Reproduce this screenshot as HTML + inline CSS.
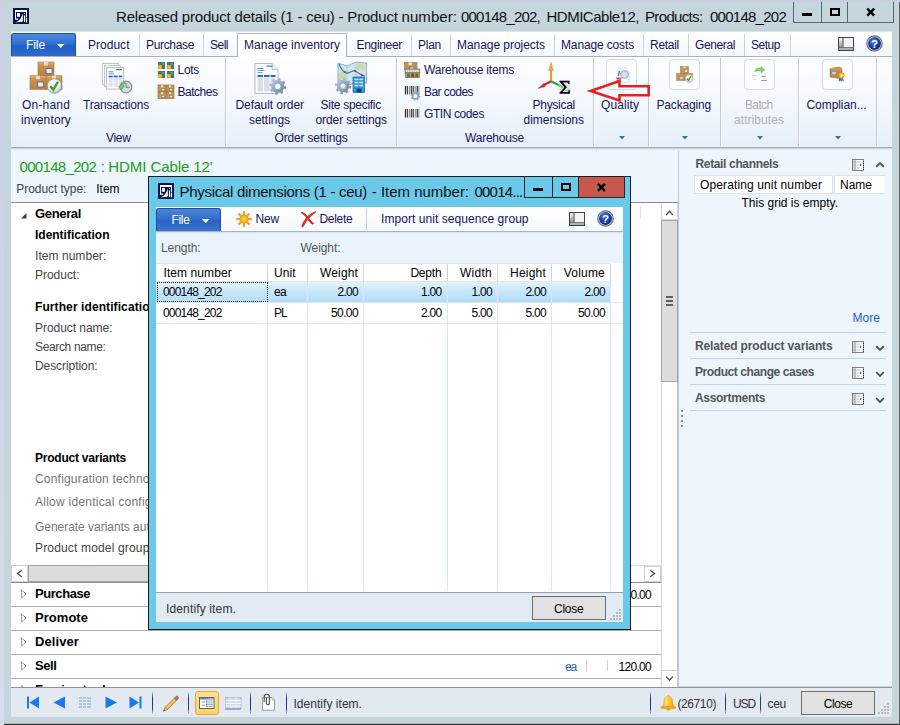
<!DOCTYPE html>
<html><head><meta charset="utf-8"><title>Released product details</title>
<style>
html,body{margin:0;padding:0}
body{width:900px;height:725px;position:relative;overflow:hidden;background:#c4d5dc;font-family:"Liberation Sans",sans-serif;font-size:12px}
.t{position:absolute;white-space:pre;line-height:1;z-index:1}
.b{position:absolute;box-sizing:border-box}
.vl{position:absolute;width:1px}
.hl{position:absolute;height:1px}
svg{position:absolute;overflow:visible}
</style></head><body>
<!-- ===== main window chrome ===== -->
<div class="b" style="left:0;top:0;width:900px;height:2px;background:#c9cfe1"></div>
<div class="b" style="left:0;top:0;width:4px;height:725px;background:linear-gradient(#c9cfe1,#d6dcec)"></div>
<div class="b" style="left:4px;top:723px;width:896px;height:1px;background:#a3afb5"></div><div class="b" style="left:4px;top:724px;width:896px;height:1px;background:#3c3c3c"></div>
<div class="vl" style="left:899px;top:2px;height:723px;background:#5a6468"></div>
<!-- window buttons -->
<div class="vl" style="left:793px;top:2px;height:20px;background:#56666e"></div>
<div class="vl" style="left:821px;top:2px;height:20px;background:#56666e"></div>
<div class="vl" style="left:847px;top:2px;height:20px;background:#56666e"></div>
<div class="vl" style="left:893px;top:2px;height:20px;background:#56666e"></div>
<div class="hl" style="left:793px;top:22px;width:101px;background:#56666e"></div>
<div class="b" style="left:802px;top:13px;width:10px;height:3px;background:#000"></div>
<div class="b" style="left:830px;top:8px;width:10px;height:8px;border:2px solid #000"></div>
<svg style="left:865px;top:7px" width="12" height="10"><path d="M2.200 1.700L9.200 8.700M9.200 1.700L2.200 8.700" stroke="#000" stroke-width="2.500" fill="none"/></svg>
<!-- app icon -->
<svg style="left:13px;top:8px" width="16" height="16" viewBox="0 0 16 16"><g id="appicon"><rect x="0" y="0" width="16" height="16" fill="#05134f"/><path d="M2 2h12v7.500h-1V4H3v6.600h2.200v1.100H2z" fill="#fff"/><rect x="4" y="5" width="2.900" height="3.800" fill="#fff"/><path d="M9.600 5.200c.2 3.500.3 6 .2 8.200-2 .3-4.500.6-7 1.100 3.500-1.700 6-4.600 6.800-9.300z" fill="#fff"/><rect x="10.900" y="7.400" width="1.300" height="6.600" fill="#fff"/><circle cx="11.500" cy="5.600" r="0.650" fill="#fff"/><rect x="13" y="10" width="1.100" height="4.400" fill="#fff"/></g></svg>
<!-- tab row -->
<div class="hl" style="left:11px;top:31px;width:881px;background:#dbe6ea"></div>
<div class="b" style="left:11px;top:32px;width:881px;height:24px;background:linear-gradient(#fff,#f3f8fd)"></div>
<!-- ribbon body -->
<div class="b" style="left:11px;top:56px;width:881px;height:91px;background:linear-gradient(#fefeff 0,#f3f8fd 50%,#e6effa 100%);border-top:1px solid #c5d0dc"></div>
<div class="hl" style="left:11px;top:147px;width:881px;background:#a3abb4"></div><div class="hl" style="left:11px;top:148px;width:881px;background:#ccd4dc;z-index:1"></div><div class="hl" style="left:11px;top:149px;width:881px;background:#e2eaf2;z-index:1"></div>
<!-- File button -->
<div class="b" style="left:11px;top:33px;width:65px;height:23px;border:1px solid #1c4da0;border-bottom:none;border-radius:3px 3px 0 0;background:linear-gradient(#4e8be0 0,#2e6fd2 45%,#1f5ec4 55%,#2c6bd0 100%)"></div>
<svg style="left:57px;top:44px;z-index:2" width="8" height="4"><path d="M0 0h7.5L3.75 4z" fill="#fff"/></svg>
<!-- active tab -->
<div class="b" style="left:237px;top:33px;width:110px;height:24px;background:#fff;border:1px solid #a9b1ba;border-bottom:none;border-radius:2px 2px 0 0"></div>
<div class="hl" style="left:11px;top:56px;width:226px;background:#a9b2bc"></div>
<div class="hl" style="left:347px;top:56px;width:545px;background:#a9b2bc"></div>
<div class="vl" style="left:139px;top:34px;height:22px;background:#c9d1da;box-shadow:1px 0 0 #fff"></div>
<div class="vl" style="left:203px;top:34px;height:22px;background:#c9d1da;box-shadow:1px 0 0 #fff"></div>
<div class="vl" style="left:411px;top:34px;height:22px;background:#c9d1da;box-shadow:1px 0 0 #fff"></div>
<div class="vl" style="left:450px;top:34px;height:22px;background:#c9d1da;box-shadow:1px 0 0 #fff"></div>
<div class="vl" style="left:554px;top:34px;height:22px;background:#c9d1da;box-shadow:1px 0 0 #fff"></div>
<div class="vl" style="left:643px;top:34px;height:22px;background:#c9d1da;box-shadow:1px 0 0 #fff"></div>
<div class="vl" style="left:688px;top:34px;height:22px;background:#c9d1da;box-shadow:1px 0 0 #fff"></div>
<div class="vl" style="left:744px;top:34px;height:22px;background:#c9d1da;box-shadow:1px 0 0 #fff"></div>
<div class="vl" style="left:790px;top:34px;height:22px;background:#c9d1da;box-shadow:1px 0 0 #fff"></div>

<svg style="left:838px;top:37px" width="17" height="15" viewBox="0 0 17 15"><use href="#layicon"/></svg>
<svg style="left:865.500px;top:34.800px" width="17" height="17" viewBox="0 0 17 17"><use href="#helpicon"/></svg>
<!-- ribbon group separators -->
<div class="vl" style="left:225px;top:58px;height:88px;background:#c3ccd6;box-shadow:1px 0 0 #fff"></div>
<div class="vl" style="left:396px;top:58px;height:88px;background:#c3ccd6;box-shadow:1px 0 0 #fff"></div>
<div class="vl" style="left:593px;top:58px;height:88px;background:#c3ccd6;box-shadow:1px 0 0 #fff"></div>
<div class="vl" style="left:648px;top:58px;height:88px;background:#c3ccd6;box-shadow:1px 0 0 #fff"></div>
<div class="vl" style="left:720px;top:58px;height:88px;background:#c3ccd6;box-shadow:1px 0 0 #fff"></div>
<div class="vl" style="left:798px;top:58px;height:88px;background:#c3ccd6;box-shadow:1px 0 0 #fff"></div>
<div class="vl" style="left:876px;top:58px;height:88px;background:#c3ccd6;box-shadow:1px 0 0 #fff"></div>
<!-- On-hand inventory icon -->
<svg style="left:30px;top:62px" width="34" height="32" viewBox="0 0 34 32">
 <defs><linearGradient id="bx" x1="0" y1="0" x2="0" y2="1"><stop offset="0" stop-color="#dcb074"/><stop offset="0.25" stop-color="#c9934c"/><stop offset="1" stop-color="#b98240"/></linearGradient>
 <radialGradient id="sv" cx="0.4" cy="0.35" r="0.7"><stop offset="0" stop-color="#fff"/><stop offset="0.7" stop-color="#e4e6e8"/><stop offset="1" stop-color="#9fa4a8"/></radialGradient></defs>
 <rect x="8" y="0" width="16" height="13.7" fill="url(#bx)" stroke="#a6753a" stroke-width="0.6"/>
 <rect x="0" y="13.7" width="16" height="13.6" fill="url(#bx)" stroke="#a6753a" stroke-width="0.6"/>
 <rect x="16" y="13.7" width="16" height="13.6" fill="url(#bx)" stroke="#a6753a" stroke-width="0.6"/>
 <rect x="14" y="0" width="4" height="3.5" fill="#ecdcc4"/><rect x="6" y="13.7" width="4" height="3.5" fill="#ecdcc4"/><rect x="22" y="13.7" width="4" height="3" fill="#ecdcc4"/>
 <rect x="16" y="6.5" width="6" height="5" fill="#e8ecf4" stroke="#5a6a98" stroke-width="0.9"/>
 <rect x="7.5" y="20" width="6" height="5" fill="#e8ecf4" stroke="#5a6a98" stroke-width="0.9"/>
 <circle cx="24.5" cy="24" r="7.3" fill="url(#sv)" stroke="#8d9296" stroke-width="0.8"/>
 <path d="M20.3 24.2l3 3.6 4.6-8" stroke="#2caa1e" stroke-width="2.3" fill="none"/>
</svg>
<!-- Transactions icon -->
<svg style="left:101px;top:62px" width="34" height="32" viewBox="0 0 34 32">
 <rect x="1.5" y="1.5" width="16" height="21" fill="#fff" stroke="#b4b8bd" stroke-width="0.8"/>
 <rect x="3.5" y="3.5" width="16" height="21" fill="#fff" stroke="#b4b8bd" stroke-width="0.8"/>
 <rect x="5.5" y="5.5" width="17" height="21.5" fill="#fff" stroke="#a9aeb4" stroke-width="0.8"/>
 <rect x="15" y="7" width="6" height="1.2" fill="#2a7bd0"/><rect x="7.5" y="9.3" width="5" height="1" fill="#4a8fd8"/><rect x="7.5" y="11.3" width="5.5" height="1" fill="#6aa2de"/>
 <rect x="7.5" y="13.6" width="4.2" height="1.8" fill="#1f6fca"/><rect x="12.6" y="13.6" width="4.2" height="1.8" fill="#1f6fca"/><rect x="17.7" y="13.6" width="3.5" height="1.8" fill="#1f6fca"/>
 <rect x="7.5" y="15.8" width="4.2" height="9" fill="#dfe4ec"/><rect x="12.6" y="15.8" width="4.2" height="9" fill="#dfe4ec"/><rect x="17.7" y="15.8" width="3.5" height="9" fill="#dfe4ec"/>
 <circle cx="25" cy="25" r="5.8" fill="#d4dce6" stroke="#8a9198" stroke-width="1.3"/>
 <path d="M25 21v4.2h3.6" stroke="#6c7a88" stroke-width="1" fill="none"/>
 <path d="M17.2 24.6l3.2 3.2 3-3.6-1.6-.2c.2-1.6 1.2-2.6 3-3-2.4-.6-4.6.4-5.4 2.8z" fill="#6fcf52" stroke="#3f9e2c" stroke-width="0.5"/>
</svg>
<!-- Lots icon -->
<svg style="left:158px;top:62px" width="16" height="16" viewBox="0 0 16 16">
 <g id="lt"><rect x="0" y="0" width="7" height="7" fill="#3b7d74"/><rect x="0" y="3" width="4" height="4" fill="#f3962a"/><rect x="1" y="4" width="2" height="2" fill="#fbc25e"/><rect x="4" y="1" width="2" height="2" fill="#5a9e92"/></g>
 <use href="#lt" x="9" y="0"/><use href="#lt" x="0" y="9"/><use href="#lt" x="9" y="9"/>
</svg>
<!-- Batches icon -->
<svg style="left:158px;top:85px" width="16" height="14" viewBox="0 0 16 14">
 <rect x="0" y="0" width="16" height="13.6" fill="#c9954e" stroke="#a37437" stroke-width="0.7"/>
 <path d="M8 0v13.6M0 6.8h16" stroke="#9a6c32" stroke-width="0.8"/>
 <rect x="3" y="0.3" width="2.2" height="2" fill="#ead9bf"/><rect x="11" y="0.3" width="2.2" height="2" fill="#ead9bf"/><rect x="3" y="7.1" width="2.2" height="2" fill="#ead9bf"/><rect x="11" y="7.1" width="2.2" height="2" fill="#ead9bf"/>
 <rect x="3.8" y="3.6" width="2.6" height="2" fill="#e8ecf4" stroke="#6a76a0" stroke-width="0.5"/><rect x="11.6" y="3.6" width="2.6" height="2" fill="#e8ecf4" stroke="#6a76a0" stroke-width="0.5"/>
 <rect x="3.8" y="10.4" width="2.6" height="2" fill="#e8ecf4" stroke="#6a76a0" stroke-width="0.5"/><rect x="11.6" y="10.4" width="2.6" height="2" fill="#e8ecf4" stroke="#6a76a0" stroke-width="0.5"/>
</svg>
<!-- Default order settings icon -->
<svg style="left:254px;top:62px" width="34" height="34" viewBox="0 0 34 34">
 <defs><linearGradient id="gr" x1="0" y1="0" x2="1" y2="1"><stop offset="0" stop-color="#b9c6d6"/><stop offset="1" stop-color="#6f86a4"/></linearGradient></defs>
 <path d="M1 1.500h17l6 6v24H1z" fill="#fdfdfe" stroke="#aeb3b9" stroke-width="0.9"/>
 <path d="M18 1.500v6h6" fill="#e9ecf0" stroke="#b0b5bb" stroke-width="0.8"/>
 <rect x="12.500" y="3.500" width="6" height="1.200" fill="#2a7bd0"/><rect x="3.500" y="6" width="6" height="1" fill="#4a8fd8"/><rect x="3.500" y="8" width="7" height="1" fill="#6aa2de"/><rect x="3.500" y="10" width="5" height="1" fill="#6aa2de"/>
 <rect x="3.500" y="13" width="5.500" height="2" fill="#1f6fca"/><rect x="10" y="13" width="5.500" height="2" fill="#1f6fca"/><rect x="16.500" y="13" width="5" height="2" fill="#1f6fca"/>
 <rect x="3.500" y="15.500" width="5.500" height="14" fill="#d9dee8"/><rect x="10" y="15.500" width="5.500" height="14" fill="#d9dee8"/><rect x="16.500" y="15.500" width="5" height="14" fill="#d9dee8"/>
 <g transform="translate(23.700,24.300)"><circle r="5" fill="none" stroke="url(#gr)" stroke-width="3"/><circle r="7" fill="none" stroke="url(#gr)" stroke-width="2.800" stroke-dasharray="2.500 3"/><circle r="3.300" fill="#fbfcfd" stroke="#7f93ae" stroke-width="0.900"/></g>
</svg>
<!-- Site specific order settings icon -->
<svg style="left:334px;top:61px" width="34" height="34" viewBox="0 0 34 34">
 <path d="M4 2l9 3 9-4 10.500 1v20l-10.500-1-9 4-9-3z" fill="#d2e5ef" stroke="#7e9ab2" stroke-width="0.8"/>
 <path d="M13 5v18M22 1v18" stroke="#a9bcc8" stroke-width="0.8"/>
 <path d="M23 3c3-1 6 0 8 2v5c-3-2-6-2-8 0z" fill="#c5dcae"/><path d="M5 12c3-2 5-1 7 1v6l-7-2z" fill="#c5dcae"/>
 <path d="M5 3c2 5 4 8 7 9s6-3 9-2 5 4 10 5" stroke="#2a7fd0" stroke-width="1.200" fill="none"/>
 <circle cx="11" cy="11" r="1" fill="#e02a2a"/><circle cx="21" cy="10" r="1" fill="#e02a2a"/><circle cx="28" cy="14" r="1" fill="#e02a2a"/>
 <g transform="translate(9,25)"><circle r="4.800" fill="none" stroke="url(#gr)" stroke-width="3"/><circle r="6.800" fill="none" stroke="url(#gr)" stroke-width="2.600" stroke-dasharray="2.400 2.940"/><circle r="3.100" fill="#eef2f6" stroke="#7f93ae" stroke-width="0.900"/><path d="M-2.500 1.500c1.500 1 3.500 1 5 0" stroke="#b8d4a0" stroke-width="1.200" fill="none"/></g>
 <rect x="19" y="16" width="11.500" height="15.500" fill="#3a94d2" stroke="#1c68a8" stroke-width="0.700"/>
 <path d="M20.500 18.500h8.500M20.500 21.500h8.500M20.500 24.500h8.500" stroke="#c4edfb" stroke-width="1.700"/>
 <path d="M24.700 17v9" stroke="#3a94d2" stroke-width="0.900"/>
 <rect x="22.500" y="27.500" width="5" height="4" fill="#12407a"/>
</svg>
<!-- Warehouse items icon -->
<svg style="left:404px;top:62px" width="16" height="16" viewBox="0 0 16 16">
 <rect x="0.400" y="0.300" width="12.600" height="7.500" fill="#c4924c" stroke="#a27434" stroke-width="0.600"/><rect x="4.500" y="0.300" width="3.500" height="3" fill="#ece0cc"/><rect x="5.500" y="5" width="4.500" height="2.500" fill="#dfe6f2" stroke="#4a5a98" stroke-width="0.600"/>
 <rect x="1" y="7" width="14.800" height="4" fill="#b4b4b4" stroke="#6e6e6e" stroke-width="0.700"/><path d="M2 9h13" stroke="#f2f2f2" stroke-width="1.500" stroke-dasharray="1.200 0.600"/>
 <rect x="1.500" y="11" width="14" height="4.600" fill="#c8a050" stroke="#7a5a22" stroke-width="0.600"/>
 <rect x="3" y="11.700" width="3" height="3.600" fill="#2e8a84"/><rect x="7.400" y="11.700" width="2.400" height="3.600" fill="#6a4420"/><rect x="11.200" y="11.700" width="3" height="3.600" fill="#4e7a50"/>
</svg>
<!-- Bar codes icon -->
<svg style="left:404px;top:86px" width="17" height="16" viewBox="0 0 17 16">
 <rect x="0.500" y="0" width="15" height="8.800" fill="#fff"/>
 <path d="M1.400 0v8.600M3.300 0v8.600M7.300 0v8.600M9.200 0v8.600M13.200 0v8.600" stroke="#222" stroke-width="1.100"/><path d="M5.300 0v8.600M11.200 0v8.600M14.800 0v8.600" stroke="#444" stroke-width="0.700"/>
 <g transform="translate(11.400,10)"><circle r="2.900" fill="none" stroke="#86aad6" stroke-width="1.900"/><circle r="4" fill="none" stroke="#86aad6" stroke-width="1.500" stroke-dasharray="1.570 1.570"/><circle r="1.700" fill="#fff"/></g>
</svg>
<!-- GTIN codes icon -->
<svg style="left:404px;top:109px" width="17" height="9" viewBox="0 0 17 9">
 <rect x="0.500" y="0" width="15" height="8.800" fill="#fff"/>
 <path d="M1.400 0v8.600M3.300 0v8.600M7.300 0v8.600M9.200 0v8.600M13.200 0v8.600" stroke="#222" stroke-width="1.100"/><path d="M5.300 0v8.600M11.200 0v8.600M14.800 0v8.600" stroke="#444" stroke-width="0.700"/>
</svg>
<!-- Physical dimensions icon -->
<svg style="left:536px;top:60px" width="38" height="36" viewBox="0 0 38 36">
 <path d="M15 21.300V9.500" stroke="#f0901e" stroke-width="1.900"/><path d="M15 2l2.300 8.600h-4.600z" fill="#f2a04a" stroke="#e0861e" stroke-width="0.400"/><path d="M14.300 4.500l-.8 5.500" stroke="#f8c890" stroke-width="0.700"/>
 <path d="M15 21.200L6.500 25.800" stroke="#d4202a" stroke-width="2.300"/><path d="M2 28.400l6-5 1.500 3.200z" fill="#d83038" stroke="#c01c24" stroke-width="0.400"/>
 <path d="M15 21.200l12.500 6.400" stroke="#2aa832" stroke-width="2.300"/>
 <rect x="22.500" y="20.300" width="12" height="13" fill="#d4d6d8" opacity="0.550"/>
 <path d="M28 31l5.500-2.500v3z" fill="#8ed88a"/>
 <path d="M23.500 20.800h10v3.200h-1.100l-.6-1.500h-5l4.200 4.700-4.500 4.800h5.600l.8-1.700h1.100v3.400H23.500v-1l5-5.400-5-5.500z" fill="#0a0a0a"/>
</svg>
<!-- dropdown icon boxes -->
<div class="b" style="left:606px;top:59px;width:31px;height:31px;border:1px solid #d3dae2;border-radius:4px;background:#fdfeff"></div>
<div class="b" style="left:669px;top:59px;width:31px;height:31px;border:1px solid #d3dae2;border-radius:4px;background:#fdfeff"></div>
<div class="b" style="left:744px;top:59px;width:31px;height:31px;border:1px solid #d3dae2;border-radius:4px;background:#fdfeff"></div>
<div class="b" style="left:822px;top:59px;width:31px;height:31px;border:1px solid #d3dae2;border-radius:4px;background:#fdfeff"></div>
<!-- quality icon -->
<svg style="left:614px;top:66.500px" width="18" height="18" viewBox="0 0 18 18">
 <path d="M4 1h8l3 3v11.500H4z" fill="#fafbfc" stroke="#cfd4da" stroke-width="0.700"/>
 <path d="M5.500 4l-1.200 5" stroke="#3a8ad6" stroke-width="1.300"/>
 <circle cx="10.500" cy="7.500" r="3.800" fill="#cfe0f4" stroke="#9aa8b8" stroke-width="1.100"/>
 <path d="M7.500 10.500l-2.300 2.300" stroke="#8a94a0" stroke-width="1.500"/>
 <path d="M2.500 10.500l3 3M5.500 10.500l-3 3" stroke="#e02020" stroke-width="1.100"/>
</svg>
<!-- packaging icon -->
<svg style="left:676px;top:66px" width="18" height="17" viewBox="0 0 18 17">
 <rect x="4.500" y="0.500" width="8" height="7" fill="#c9954e" stroke="#a37437" stroke-width="0.500"/>
 <rect x="0.500" y="7.500" width="8" height="7" fill="#c9954e" stroke="#a37437" stroke-width="0.500"/>
 <rect x="8.500" y="7.500" width="8" height="7" fill="#c9954e" stroke="#a37437" stroke-width="0.500"/>
 <rect x="7.500" y="0.500" width="2" height="1.800" fill="#ead9bf"/><rect x="8.500" y="3.800" width="3" height="2.400" fill="#e8ecf4" stroke="#6a76a0" stroke-width="0.500"/><rect x="4" y="10.800" width="3" height="2.400" fill="#e8ecf4" stroke="#6a76a0" stroke-width="0.500"/>
 <circle cx="13" cy="12.500" r="3.900" fill="#eef0f1" stroke="#8d9296" stroke-width="0.600"/>
 <path d="M10.900 12.600l1.600 1.900 2.400-4.200" stroke="#2caa1e" stroke-width="1.300" fill="none"/>
</svg>
<!-- batch attributes icon (disabled) -->
<svg style="left:751px;top:66px" width="18" height="17" viewBox="0 0 18 17">
 <path d="M3.500 5.500c1-3 4-4 6.500-3.200V0.500l4 3.300-4 3.200V5c-2-.6-4 0-6.500 0.500z" fill="#86d676" stroke="#58b048" stroke-width="0.500"/>
 <path d="M2 9.500h4M2 13.500h3" stroke="#d8dce2" stroke-width="1.200"/><path d="M10 10.500h5M10 14.500h6" stroke="#9aa0a8" stroke-width="1.100"/><path d="M8 8l.8 1M14 7.500l.5 1.200" stroke="#b4bac2" stroke-width="0.800"/>
</svg>
<!-- compliance icon -->
<svg style="left:829px;top:66px" width="18" height="17" viewBox="0 0 18 17">
 <path d="M1 2.500l9-1.500 3 1.500v8.500l-3 1.500-9-1.500z" fill="#c08a46" stroke="#94682e" stroke-width="0.500"/>
 <path d="M1 2.500l9 .8 3-.8" stroke="#deb67e" stroke-width="0.800" fill="none"/>
 <rect x="3" y="5.500" width="4" height="3" fill="#c9d6ea" stroke="#7a86a8" stroke-width="0.500"/>
 <path d="M10.500 11l-.8 4.500 1.800-1 .8 1.500.8-4.500z" fill="#2a6fd0"/><path d="M13.500 11l1.400 4.300-1.600-.6-.9 1.400-.6-4.600z" fill="#3a82e0"/>
 <circle cx="12.500" cy="9.500" r="2.800" fill="#f6c42a" stroke="#c8941a" stroke-width="0.600"/><circle cx="12.500" cy="9.500" r="1.200" fill="#fbe48a"/>
</svg>
<!-- dropdown arrows -->
<svg style="left:618.500px;top:135.500px" width="6" height="4"><path d="M0 0h6l-3 3.500z" fill="#4869a8"/></svg>
<svg style="left:681.500px;top:135.500px" width="6" height="4"><path d="M0 0h6l-3 3.500z" fill="#4869a8"/></svg>
<svg style="left:756.500px;top:135.500px" width="6" height="4"><path d="M0 0h6l-3 3.500z" fill="#4869a8"/></svg>
<svg style="left:834.500px;top:135.500px" width="6" height="4"><path d="M0 0h6l-3 3.500z" fill="#4869a8"/></svg>
<!-- red annotation arrow -->
<svg style="left:585px;top:75px;z-index:5" width="70" height="32" viewBox="585 75 70 32"><path d="M590.600 91L619.500 81V86.200H648.700V95.200H619.500V100.500Z" fill="none" stroke="#ea1c24" stroke-width="2.600" stroke-linejoin="miter"/></svg>


<!-- ===== content ===== -->
<div class="b" style="left:11px;top:148px;width:881px;height:538px;background:#edf5fd"></div>
<!-- white main panel -->
<div class="b" style="left:11px;top:202px;width:667px;height:485px;background:#fff;border-top:1px solid #8c8c8c"></div>
<!-- main panel pieces -->
<!-- expand triangle General -->
<svg style="left:21px;top:213px;z-index:1" width="6" height="6"><path d="M5.500 0v5.500H0z" fill="#404040"/></svg>
<!-- vertical scrollbar -->
<div class="b" style="left:661px;top:203px;width:17px;height:483px;background:#fff;border-left:1px solid #d4d4d4;border-right:1px solid #b6bcc6"></div>
<div class="b" style="left:661px;top:220px;width:17px;height:162px;background:#dcdcdc;border:1px solid #a6a6a6"></div>
<div class="vl" style="left:678px;top:151px;height:536px;background:#b9c8df"></div>
<div class="b" style="left:661px;top:203px;width:17px;height:17px;background:#fff;border:1px solid #d8d8d8;border-top:none"></div>
<svg style="left:664px;top:207px" width="11" height="10"><path d="M2.100 8L5.500 4.200 8.900 8" stroke="#505050" stroke-width="1.300" fill="none"/></svg>
<div class="b" style="left:661px;top:670px;width:17px;height:18px;background:#fff;border:1px solid #cfcfcf"></div>
<svg style="left:664px;top:675px" width="11" height="8"><path d="M2.100 1.500L5.500 5.300 8.900 1.500" stroke="#505050" stroke-width="1.300" fill="none"/></svg>
<div class="b" style="left:666px;top:296px;width:7px;height:2px;background:#606060"></div>
<div class="b" style="left:666px;top:300px;width:7px;height:2px;background:#606060"></div>
<div class="b" style="left:666px;top:304px;width:7px;height:2px;background:#606060"></div>
<div class="vl" style="left:640px;top:206px;height:13px;background:#dcdfe4"></div>
<!-- horizontal scrollbar -->
<div class="b" style="left:11px;top:565px;width:650px;height:17px;background:#fff;border-top:1px solid #e0e0e0"></div>
<div class="b" style="left:28px;top:565px;width:575px;height:17px;background:#dcdcdc;border:1px solid #a6a6a6"></div>
<div class="b" style="left:11px;top:565px;width:17px;height:17px;background:#fff;border:1px solid #cfcfcf"></div>
<svg style="left:15px;top:569px" width="8" height="10"><path d="M6.800 1.200L2.400 4.500 6.800 7.800" stroke="#505050" stroke-width="1.300" fill="none"/></svg>
<div class="b" style="left:644px;top:566px;width:17px;height:16px;background:#fff;border:1px solid #cfcfcf"></div>
<svg style="left:649px;top:569px" width="8" height="10"><path d="M1.200 1.200L5.600 4.500 1.200 7.800" stroke="#505050" stroke-width="1.300" fill="none"/></svg>
<!-- fast tab dividers -->
<div class="hl" style="left:11px;top:582px;width:650px;background:#8e8e8e"></div>
<div class="hl" style="left:11px;top:606px;width:650px;background:#adadad"></div>
<div class="hl" style="left:11px;top:630px;width:650px;background:#adadad"></div>
<div class="hl" style="left:11px;top:654px;width:650px;background:#adadad"></div>
<div class="hl" style="left:11px;top:678px;width:650px;background:#adadad"></div>
<!-- collapsed triangles -->
<svg style="left:21px;top:588.500px" width="6" height="10"><path d="M0.600 0.800v8.400L5 5z" fill="#fff" stroke="#8a8a8a" stroke-width="0.900"/></svg>
<svg style="left:21px;top:612.500px" width="6" height="10"><path d="M0.600 0.800v8.400L5 5z" fill="#fff" stroke="#8a8a8a" stroke-width="0.900"/></svg>
<svg style="left:21px;top:636.500px" width="6" height="10"><path d="M0.600 0.800v8.400L5 5z" fill="#fff" stroke="#8a8a8a" stroke-width="0.900"/></svg>
<svg style="left:21px;top:660.500px" width="6" height="10"><path d="M0.600 0.800v8.400L5 5z" fill="#fff" stroke="#8a8a8a" stroke-width="0.900"/></svg>
<svg style="left:21px;top:684.500px" width="6" height="10"><path d="M0.600 0.800v8.400L5 5z" fill="#fff" stroke="#8a8a8a" stroke-width="0.900"/></svg>
<!-- sell summary separators -->
<div class="vl" style="left:586px;top:660px;height:11px;background:#c9ced4"></div>
<div class="vl" style="left:607px;top:660px;height:11px;background:#c9ced4"></div>

<!-- factbox -->

<div class="b" style="left:694px;top:175px;width:139px;height:19px;background:#fff;border:1px solid #dde1e7"></div>
<div class="b" style="left:834px;top:175px;width:51px;height:19px;background:#fff;border:1px solid #dde1e7;border-right:none"></div>
<div class="hl" style="left:690px;top:332px;width:196px;background:#c6d2e6"></div>
<div class="hl" style="left:690px;top:358px;width:196px;background:#c6d2e6"></div>
<div class="hl" style="left:690px;top:384px;width:196px;background:#c6d2e6"></div>
<div class="hl" style="left:690px;top:410px;width:196px;background:#c6d2e6"></div>
<!-- factbox icons -->
<svg style="left:852px;top:159px" width="12" height="12" viewBox="0 0 12 12"><g id="fbi"><rect x="0.500" y="0.500" width="11" height="11" fill="#fff" stroke="#7e7e7e"/><rect x="1" y="1" width="2.800" height="10" fill="#d2d2d2"/><path d="M3.900 1v10" stroke="#9a9a9a" stroke-width="0.600"/><path d="M2 3h1M2 6h1M2 9h1" stroke="#858585" stroke-width="1"/><path d="M5.200 3h3M5.200 6h1.600M5.200 9h2.400" stroke="#a8a8a8" stroke-width="0.900"/><path d="M7.800 4.300L9.800 6 7.800 7.700z" fill="#6a6a6a"/><path d="M11.500 1v10" stroke="#103a8a" stroke-width="1"/><path d="M11.500 1v10" stroke="#2ab4c8" stroke-width="1" stroke-dasharray="1 1"/></g></svg>
<svg style="left:852px;top:341px" width="12" height="12" viewBox="0 0 12 12"><use href="#fbi"/></svg>
<svg style="left:852px;top:367px" width="12" height="12" viewBox="0 0 12 12"><use href="#fbi"/></svg>
<svg style="left:852px;top:393px" width="12" height="12" viewBox="0 0 12 12"><use href="#fbi"/></svg>
<svg style="left:875px;top:161px" width="10" height="8"><path d="M1.200 5.800L5 2 8.800 5.800" stroke="#555" stroke-width="1.900" fill="none"/></svg>
<svg style="left:875px;top:343.500px" width="10" height="8"><path d="M1.200 2.200L5 6 8.800 2.200" stroke="#555" stroke-width="1.900" fill="none"/></svg>
<svg style="left:875px;top:369.500px" width="10" height="8"><path d="M1.200 2.200L5 6 8.800 2.200" stroke="#555" stroke-width="1.900" fill="none"/></svg>
<svg style="left:875px;top:395.500px" width="10" height="8"><path d="M1.200 2.200L5 6 8.800 2.200" stroke="#555" stroke-width="1.900" fill="none"/></svg>
<!-- splitter dots -->
<div class="b" style="left:682px;top:411px;width:2px;height:2px;background:#fff"></div><div class="b" style="left:681px;top:410px;width:2px;height:2px;background:#8a8f98"></div>
<div class="b" style="left:682px;top:416px;width:2px;height:2px;background:#fff"></div><div class="b" style="left:681px;top:415px;width:2px;height:2px;background:#8a8f98"></div>
<div class="b" style="left:682px;top:421px;width:2px;height:2px;background:#fff"></div><div class="b" style="left:681px;top:420px;width:2px;height:2px;background:#8a8f98"></div>
<div class="b" style="left:682px;top:426px;width:2px;height:2px;background:#fff"></div><div class="b" style="left:681px;top:425px;width:2px;height:2px;background:#8a8f98"></div>

<!-- status bar -->
<div class="b" style="left:11px;top:687px;width:881px;height:30px;background:#e2e9f1;border-top:1px solid #8e949a;z-index:3"></div>
<!-- status bar items -->
<svg style="left:26px;top:696.300px;z-index:4" width="120" height="14" viewBox="0 0 120 14">
 <rect x="1" y="0.500" width="2" height="12" fill="#187af0"/><path d="M13 0.500v12L3.500 6.500z" fill="#187af0"/>
 <path d="M39 0.500v12L27.500 6.500z" fill="#187af0"/>
 <g fill="#a9c4ee"><rect x="53" y="1" width="3" height="2"/><rect x="57" y="1" width="3" height="2"/><rect x="61" y="1" width="4" height="2"/><rect x="53" y="4" width="3" height="2"/><rect x="57" y="4" width="3" height="2"/><rect x="61" y="4" width="4" height="2"/><rect x="53" y="7" width="3" height="2"/><rect x="57" y="7" width="3" height="2"/><rect x="61" y="7" width="4" height="2"/><rect x="53" y="10" width="3" height="2"/><rect x="57" y="10" width="3" height="2"/><rect x="61" y="10" width="4" height="2"/></g>
 <path d="M79.500 0.500v12L91 6.500z" fill="#187af0"/>
 <path d="M103.500 0.500v12L113 6.500z" fill="#187af0"/><rect x="113.500" y="0.500" width="2" height="12" fill="#187af0"/>
</svg>
<div class="vl" style="left:152px;top:692px;height:22px;background:linear-gradient(rgba(30,60,120,0.15),#1e3c78 25%,#1e3c78 75%,rgba(30,60,120,0.15));z-index:4"></div>
<div class="vl" style="left:188px;top:692px;height:22px;background:linear-gradient(rgba(30,60,120,0.15),#1e3c78 25%,#1e3c78 75%,rgba(30,60,120,0.15));z-index:4"></div>
<div class="vl" style="left:250px;top:692px;height:22px;background:linear-gradient(rgba(30,60,120,0.15),#1e3c78 25%,#1e3c78 75%,rgba(30,60,120,0.15));z-index:4"></div>
<div class="vl" style="left:286px;top:692px;height:22px;background:linear-gradient(rgba(30,60,120,0.15),#1e3c78 25%,#1e3c78 75%,rgba(30,60,120,0.15));z-index:4"></div>
<div class="vl" style="left:650px;top:692px;height:22px;background:linear-gradient(rgba(30,60,120,0.15),#1e3c78 25%,#1e3c78 75%,rgba(30,60,120,0.15));z-index:4"></div>
<div class="vl" style="left:725px;top:692px;height:22px;background:linear-gradient(rgba(30,60,120,0.15),#1e3c78 25%,#1e3c78 75%,rgba(30,60,120,0.15));z-index:4"></div>
<div class="vl" style="left:760px;top:692px;height:22px;background:linear-gradient(rgba(30,60,120,0.15),#1e3c78 25%,#1e3c78 75%,rgba(30,60,120,0.15));z-index:4"></div>
<!-- pencil -->
<svg style="left:162px;top:695px;z-index:4" width="18" height="17" viewBox="0 0 18 17"><path d="M3 12.500L12.800 2.700l2.200 2.200L5.200 14.700z" fill="#f2b63e" stroke="#9a7428" stroke-width="0.700"/><path d="M4.100 13.600L13.900 3.800" stroke="#fbdc8a" stroke-width="0.800"/><path d="M12.800 2.700l1-1c.6-.6 1.600-.6 2.200 0s.6 1.600 0 2.200l-1 1z" fill="#d86a5a" stroke="#8a4a3a" stroke-width="0.600"/><path d="M12.300 3.200l2.200 2.200" stroke="#5a9a4a" stroke-width="0.900"/><path d="M1.300 16.200l1.700-3.700 2.200 2.200z" fill="#e8d0a8" stroke="#6a5a3a" stroke-width="0.500"/><path d="M1.300 16.200l.8-1.700 1 1z" fill="#333"/></svg>
<!-- highlighted details-view button -->
<div class="b" style="left:195px;top:691px;width:24px;height:24px;background:linear-gradient(#fddf8c,#fbd46a);border:1px solid #e8a83a;border-radius:3px;z-index:4"></div>
<svg style="left:199px;top:697px;z-index:5" width="16" height="12" viewBox="0 0 16 12"><rect x="0.500" y="0.500" width="14.500" height="11" fill="#fff" stroke="#5e6470"/><rect x="1" y="1" width="13.500" height="1.600" fill="#7e8eb4"/><path d="M9.500 1.800h4" stroke="#fff" stroke-width="0.700" stroke-dasharray="1 0.700"/><path d="M2.500 5h3.300M2.500 8.300h3.300" stroke="#8a8a8a" stroke-width="0.900"/><rect x="7.300" y="4" width="5.800" height="2" fill="#fff" stroke="#8a8a8a" stroke-width="0.700"/><rect x="7.300" y="7.300" width="5.800" height="2" fill="#fff" stroke="#8a8a8a" stroke-width="0.700"/></svg>
<!-- grid view icon -->
<svg style="left:225px;top:697px;z-index:4" width="17" height="13" viewBox="0 0 17 13"><rect x="0.500" y="0.500" width="15.500" height="11.500" fill="#cdd7f0" stroke="#a8b4d8" stroke-width="0.800"/><path d="M0.500 3.500h15.500M0.500 6.300h15.500M0.500 9.100h15.500" stroke="#fff" stroke-width="1"/><path d="M5.500 0.500v11.500M10.800 0.500v11.500" stroke="#eef2fb" stroke-width="0.900"/><path d="M0.500 12h15.500" stroke="#7e8cc0" stroke-width="1.200"/></svg>
<!-- attachment icon -->
<svg style="left:262px;top:693.500px;z-index:4" width="14" height="17" viewBox="0 0 14 17"><path d="M0.500 3.500h9.500l2.500 2.500v10.200H0.500z" fill="#fff" stroke="#8e8e8e" stroke-width="0.900"/><path d="M10 3.500v2.500h2.500" fill="#eee" stroke="#8e8e8e" stroke-width="0.700"/><path d="M2.200 8.200V2.800a2.600 2.600 0 0 1 5.200 0v6.400a1.500 1.500 0 0 1-3 0V3.400" stroke="#4a4a4a" stroke-width="1.100" fill="none"/></svg>
<!-- bell -->
<svg style="left:660px;top:695px;z-index:4" width="17" height="16" viewBox="0 0 17 16"><defs><linearGradient id="bg1" x1="0" y1="0" x2="1" y2="0"><stop offset="0" stop-color="#f6b422"/><stop offset="0.350" stop-color="#fde06a"/><stop offset="0.700" stop-color="#f8bc28"/><stop offset="1" stop-color="#e89a10"/></linearGradient></defs><circle cx="8.300" cy="1.300" r="1.200" fill="#f4b01e"/><path d="M8.300 1.300c-3 0-4.500 2.300-4.500 5.200 0 2.800-.6 4.400-1.600 5.300h12.200c-1-.9-1.600-2.500-1.600-5.300 0-2.900-1.500-5.200-4.500-5.200z" fill="url(#bg1)" stroke="#e09a12" stroke-width="0.400"/><path d="M0.700 12.800c0-.8.700-1.400 1.500-1.400h12.200c.8 0 1.500.6 1.500 1.400 0 .5-.4.800-.9.800H1.600c-.5 0-.9-.3-.9-.8z" fill="#f2a818" stroke="#d88c0c" stroke-width="0.400"/><ellipse cx="8.300" cy="14.300" rx="1.900" ry="1.200" fill="#e8980e"/></svg>
<!-- close button -->
<div class="b" style="left:801px;top:691px;width:74px;height:24px;background:#e1e1e1;border:1px solid #707070;z-index:4"></div>
<!-- size grip -->
<svg style="left:878px;top:703px;z-index:4" width="12" height="12" viewBox="0 0 12 12" fill="#b4bcc6"><rect x="9" y="0" width="2" height="2"/><rect x="6" y="3" width="2" height="2"/><rect x="9" y="3" width="2" height="2"/><rect x="3" y="6" width="2" height="2"/><rect x="6" y="6" width="2" height="2"/><rect x="9" y="6" width="2" height="2"/><rect x="0" y="9" width="2" height="2"/><rect x="3" y="9" width="2" height="2"/><rect x="6" y="9" width="2" height="2"/><rect x="9" y="9" width="2" height="2"/></svg>


<!-- ===== dialog ===== -->
<div class="b" style="left:148px;top:176px;width:483px;height:454px;background:#6ac8e8;border:1px solid #1c1c1c;z-index:10"></div>
<div class="b" style="left:156px;top:207px;width:467px;height:415px;background:#fff;z-index:11"></div>
<!-- dialog window buttons -->
<div class="b" style="left:524px;top:176px;width:101px;height:22px;border:1px solid #262626;border-top:none;z-index:12"></div>
<div class="b" style="left:578px;top:177px;width:46px;height:20px;background:#c75850;z-index:12"></div>
<div class="vl" style="left:552px;top:177px;height:20px;background:#262626;z-index:12"></div>
<div class="vl" style="left:578px;top:177px;height:20px;background:#262626;z-index:12"></div>
<div class="b" style="left:533px;top:188px;width:10px;height:3px;background:#000;z-index:13"></div>
<div class="b" style="left:561px;top:183px;width:10px;height:8px;border:2px solid #000;z-index:13"></div>
<svg style="left:596px;top:182px;z-index:13" width="12" height="10"><path d="M1.900 1.800L8.900 8.800M8.900 1.800L1.900 8.800" stroke="#000" stroke-width="2.500" fill="none"/></svg>
<!-- dialog app icon -->
<svg style="left:158px;top:183px;z-index:12" width="16" height="16" viewBox="0 0 16 16"><use href="#appicon"/></svg>
<!-- toolbar -->
<div class="b" style="left:156px;top:207px;width:467px;height:25px;background:linear-gradient(#fff,#f6f9fd);border-bottom:1px solid #a9b2be;z-index:12"></div>
<div class="b" style="left:156px;top:232px;width:467px;height:31px;background:linear-gradient(#d9e1ea 0,#ebf4fd 8%,#ebf4fd 100%);z-index:12"></div>
<div class="b" style="left:156px;top:208px;width:65px;height:23px;border:1px solid #1f4c9e;border-bottom:none;border-radius:3px 3px 0 0;background:linear-gradient(#4f86d6 0,#326fca 45%,#2a64c0 55%,#3875d0 100%);z-index:13"></div>
<svg style="left:202px;top:219px;z-index:14" width="8" height="4"><path d="M0 0h7.500L3.750 4z" fill="#fff"/></svg>
<!-- new icon -->
<svg style="left:236px;top:211px;z-index:13" width="16" height="16" viewBox="-8 -8 16 16"><defs><radialGradient id="ng"><stop offset="0" stop-color="#ffe45a"/><stop offset="0.550" stop-color="#fdc426"/><stop offset="1" stop-color="#f09a12"/></radialGradient></defs><g fill="#f2a016" stroke="#e08c0c" stroke-width="0.300"><path transform="rotate(0)" d="M-1.250 -1.500L-0.850 -7.700H0.850L1.250 -1.500z"/><path transform="rotate(45)" d="M-1.250 -1.500L-0.850 -7.700H0.850L1.250 -1.500z"/><path transform="rotate(90)" d="M-1.250 -1.500L-0.850 -7.700H0.850L1.250 -1.500z"/><path transform="rotate(135)" d="M-1.250 -1.500L-0.850 -7.700H0.850L1.250 -1.500z"/><path transform="rotate(180)" d="M-1.250 -1.500L-0.850 -7.700H0.850L1.250 -1.500z"/><path transform="rotate(225)" d="M-1.250 -1.500L-0.850 -7.700H0.850L1.250 -1.500z"/><path transform="rotate(270)" d="M-1.250 -1.500L-0.850 -7.700H0.850L1.250 -1.500z"/><path transform="rotate(315)" d="M-1.250 -1.500L-0.850 -7.700H0.850L1.250 -1.500z"/></g><circle r="4" fill="url(#ng)"/></svg>
<!-- delete icon -->
<svg style="left:300px;top:211px;z-index:13" width="17" height="16" viewBox="0 0 17 16"><path d="M0.800 1.300c2.200 0 4.200 1.400 6 3.600 2 2.500 3.800 5.200 6.800 7.700-.5.400-1.200.600-1.800.400C9.500 10.800 8 8.300 6 5.800 4.500 4 3 2.600 0.800 1.300z" fill="#d8261c" stroke="#d8261c" stroke-width="1" stroke-linejoin="round"/><path d="M15.600 0.700c-3.500 1.200-6.800 3.600-9.500 6.800C4 10 2.800 12.300 2 15.200c-.1.400.7.600 1 .2C4.500 12.800 5.800 10.400 7.600 8.200 9.800 5.400 12.500 3 15.600 0.700z" fill="#dc3226" stroke="#dc3226" stroke-width="1.100" stroke-linejoin="round"/></svg>
<div class="vl" style="left:366px;top:209px;height:21px;background:#c3ccd6;box-shadow:1px 0 0 #fff;z-index:13"></div>
<!-- layout + help -->
<svg style="left:569px;top:212px;z-index:13" width="17" height="15" viewBox="0 0 17 15"><g id="layicon"><defs><linearGradient id="lyg" x1="0" y1="0" x2="0" y2="1"><stop offset="0" stop-color="#f6f6f6"/><stop offset="1" stop-color="#8e9298"/></linearGradient></defs><rect x="0.500" y="0.500" width="15" height="13" fill="#f3f3f3" stroke="#3e444c"/><rect x="1" y="1" width="3.500" height="9.500" fill="url(#lyg)"/><path d="M5 0.500v10" stroke="#3e444c" stroke-width="1"/><rect x="1" y="10.500" width="14" height="2.500" fill="#aeb2b6"/><path d="M0.500 10.500h15" stroke="#5a6068" stroke-width="0.800"/></g></svg>
<svg style="left:596.500px;top:210.200px;z-index:13" width="17" height="17" viewBox="0 0 17 17"><g id="helpicon"><defs><radialGradient id="hg" cx="0.400" cy="0.300" r="0.800"><stop offset="0" stop-color="#4a7ae0"/><stop offset="0.550" stop-color="#1a3ea6"/><stop offset="1" stop-color="#0c2478"/></radialGradient></defs><circle cx="8.500" cy="8.500" r="7.700" fill="#e4e6ea" stroke="#6c7078" stroke-width="1.200"/><circle cx="8.500" cy="8.500" r="6.500" fill="url(#hg)"/><text x="8.500" y="12.600" text-anchor="middle" font-family="Liberation Sans, sans-serif" font-weight="700" font-size="11.500" fill="#fff">?</text></g></svg>
<!-- grid -->
<div class="b" style="left:156px;top:263px;width:455px;height:19px;background:#fff;border-top:1px solid #dfe7f0;border-bottom:1px solid #dde5ee;z-index:12"></div>
<div class="b" style="left:156px;top:282px;width:455px;height:20px;background:linear-gradient(#e3f3fd 0,#c6e6f9 50%,#b3ddf5 100%);z-index:12"></div>
<div class="hl" style="left:156px;top:302px;width:467px;background:#d9e6f4;z-index:12"></div>
<div class="hl" style="left:156px;top:323px;width:467px;background:#d9e6f4;z-index:12"></div>
<div class="b" style="left:157px;top:282px;width:111px;height:20px;border:1px dotted #111;z-index:13"></div>
<div class="vl" style="left:267px;top:264px;height:327px;background:#d9e6f4;z-index:12"></div>
<div class="vl" style="left:267px;top:265px;height:16px;background:#c9d3df;z-index:13"></div>
<div class="vl" style="left:307px;top:264px;height:327px;background:#d9e6f4;z-index:12"></div>
<div class="vl" style="left:307px;top:265px;height:16px;background:#c9d3df;z-index:13"></div>
<div class="vl" style="left:363px;top:264px;height:327px;background:#d9e6f4;z-index:12"></div>
<div class="vl" style="left:363px;top:265px;height:16px;background:#c9d3df;z-index:13"></div>
<div class="vl" style="left:447px;top:264px;height:327px;background:#d9e6f4;z-index:12"></div>
<div class="vl" style="left:447px;top:265px;height:16px;background:#c9d3df;z-index:13"></div>
<div class="vl" style="left:497px;top:264px;height:327px;background:#d9e6f4;z-index:12"></div>
<div class="vl" style="left:497px;top:265px;height:16px;background:#c9d3df;z-index:13"></div>
<div class="vl" style="left:551px;top:264px;height:327px;background:#d9e6f4;z-index:12"></div>
<div class="vl" style="left:551px;top:265px;height:16px;background:#c9d3df;z-index:13"></div>
<div class="vl" style="left:610px;top:264px;height:327px;background:#d9e6f4;z-index:12"></div>
<div class="vl" style="left:610px;top:265px;height:16px;background:#c9d3df;z-index:13"></div>

<!-- dialog status -->
<div class="b" style="left:156px;top:592px;width:467px;height:30px;background:#e2eaf3;border-top:1px solid #9aa0a8;z-index:12"></div>
<div class="b" style="left:532px;top:596px;width:74px;height:24px;background:#e1e1e1;border:1px solid #707070;z-index:13"></div>
<svg style="left:610px;top:609px;z-index:13" width="12" height="12" viewBox="0 0 12 12" fill="#b4bcc6"><rect x="9" y="0" width="2" height="2"/><rect x="6" y="3" width="2" height="2"/><rect x="9" y="3" width="2" height="2"/><rect x="3" y="6" width="2" height="2"/><rect x="6" y="6" width="2" height="2"/><rect x="9" y="6" width="2" height="2"/><rect x="0" y="9" width="2" height="2"/><rect x="3" y="9" width="2" height="2"/><rect x="6" y="9" width="2" height="2"/><rect x="9" y="9" width="2" height="2"/></svg>


<span class="t" style="left:116.00px;top:9.30px;font-size:15px;color:#111;letter-spacing:-0.192px;">Released product details (1 - ceu) - Product</span>
<span class="t" style="left:401.50px;top:9.30px;font-size:15px;color:#111;letter-spacing:0.067px;">number:</span>
<span class="t" style="left:461.00px;top:9.30px;font-size:15px;color:#111;letter-spacing:-0.781px;">000148_202,</span>
<span class="t" style="left:546.50px;top:9.30px;font-size:15px;color:#111;letter-spacing:-0.490px;">HDMICable12,</span>
<span class="t" style="left:645.00px;top:9.30px;font-size:15px;color:#111;letter-spacing:-0.653px;">Products:</span>
<span class="t" style="left:710.00px;top:9.30px;font-size:15px;color:#111;letter-spacing:-0.744px;">000148_202</span>
<span class="t" style="left:26.00px;top:38.84px;font-size:12px;color:#fff;letter-spacing:-0.086px;">File</span>
<span class="t" style="left:88.00px;top:38.84px;font-size:12px;color:#15155a;letter-spacing:0.020px;">Product</span>
<span class="t" style="left:146.00px;top:38.84px;font-size:12px;color:#15155a;letter-spacing:-0.338px;">Purchase</span>
<span class="t" style="left:210.00px;top:38.84px;font-size:12px;color:#15155a;letter-spacing:-0.504px;">Sell</span>
<span class="t" style="left:244.00px;top:38.84px;font-size:12px;color:#15155a;letter-spacing:0.038px;">Manage inventory</span>
<span class="t" style="left:356.50px;top:38.84px;font-size:12px;color:#15155a;letter-spacing:-0.318px;">Engineer</span>
<span class="t" style="left:418.00px;top:38.84px;font-size:12px;color:#15155a;letter-spacing:-0.258px;">Plan</span>
<span class="t" style="left:457.00px;top:38.84px;font-size:12px;color:#15155a;letter-spacing:-0.048px;">Manage projects</span>
<span class="t" style="left:561.00px;top:38.84px;font-size:12px;color:#15155a;letter-spacing:-0.143px;">Manage costs</span>
<span class="t" style="left:650.00px;top:38.84px;font-size:12px;color:#15155a;letter-spacing:-0.281px;">Retail</span>
<span class="t" style="left:695.00px;top:38.84px;font-size:12px;color:#15155a;letter-spacing:-0.386px;">General</span>
<span class="t" style="left:751.00px;top:38.84px;font-size:12px;color:#15155a;letter-spacing:-0.472px;">Setup</span>
<span class="t" style="left:22.00px;top:98.84px;font-size:12px;color:#15155a;letter-spacing:0.185px;">On-hand</span>
<span class="t" style="left:21.00px;top:113.84px;font-size:12px;color:#15155a;letter-spacing:0.144px;">inventory</span>
<span class="t" style="left:83.00px;top:98.84px;font-size:12px;color:#15155a;letter-spacing:-0.188px;">Transactions</span>
<span class="t" style="left:177.50px;top:63.84px;font-size:12px;color:#15155a;letter-spacing:-0.297px;">Lots</span>
<span class="t" style="left:177.50px;top:85.84px;font-size:12px;color:#15155a;letter-spacing:-0.480px;">Batches</span>
<span class="t" style="left:106.00px;top:131.84px;font-size:12px;color:#15155a;letter-spacing:-0.324px;">View</span>
<span class="t" style="left:235.50px;top:98.84px;font-size:12px;color:#15155a;letter-spacing:-0.067px;">Default order</span>
<span class="t" style="left:249.00px;top:113.84px;font-size:12px;color:#15155a;letter-spacing:-0.045px;">settings</span>
<span class="t" style="left:320.50px;top:98.84px;font-size:12px;color:#15155a;letter-spacing:-0.272px;">Site specific</span>
<span class="t" style="left:315.50px;top:113.84px;font-size:12px;color:#15155a;letter-spacing:-0.086px;">order settings</span>
<span class="t" style="left:274.50px;top:131.84px;font-size:12px;color:#15155a;letter-spacing:-0.170px;">Order settings</span>
<span class="t" style="left:424.00px;top:63.84px;font-size:12px;color:#15155a;letter-spacing:-0.196px;">Warehouse items</span>
<span class="t" style="left:424.00px;top:85.84px;font-size:12px;color:#15155a;letter-spacing:-0.559px;">Bar codes</span>
<span class="t" style="left:424.00px;top:107.84px;font-size:12px;color:#15155a;letter-spacing:-0.403px;">GTIN codes</span>
<span class="t" style="left:532.50px;top:98.84px;font-size:12px;color:#15155a;letter-spacing:-0.273px;">Physical</span>
<span class="t" style="left:523.50px;top:113.84px;font-size:12px;color:#15155a;letter-spacing:-0.020px;">dimensions</span>
<span class="t" style="left:465.00px;top:131.84px;font-size:12px;color:#15155a;letter-spacing:-0.214px;">Warehouse</span>
<span class="t" style="left:601.00px;top:98.84px;font-size:12px;color:#15155a;letter-spacing:0.092px;">Quality</span>
<span class="t" style="left:656.50px;top:98.84px;font-size:12px;color:#15155a;letter-spacing:-0.172px;">Packaging</span>
<span class="t" style="left:745.00px;top:98.84px;font-size:12px;color:#b0b0ba;letter-spacing:-0.637px;">Batch</span>
<span class="t" style="left:734.00px;top:113.84px;font-size:12px;color:#b0b0ba;letter-spacing:0.064px;">attributes</span>
<span class="t" style="left:806.50px;top:98.84px;font-size:12px;color:#15155a;letter-spacing:-0.064px;">Complian...</span>
<span class="t" style="left:19.50px;top:159.30px;font-size:15px;color:#229c22;letter-spacing:-0.674px;">000148_202</span>
<span class="t" style="left:100.80px;top:159.30px;font-size:15px;color:#229c22;">:</span>
<span class="t" style="left:108.30px;top:159.30px;font-size:15px;color:#229c22;letter-spacing:-0.079px;">HDMI Cable 12&#x27;</span>
<span class="t" style="left:16.30px;top:182.84px;font-size:12px;color:#444;letter-spacing:-0.055px;">Product type:</span>
<span class="t" style="left:96.30px;top:183.14px;font-size:12px;letter-spacing:-0.036px;">Item</span>
<span class="t" style="left:35.00px;top:207.00px;font-size:13px;font-weight:700;letter-spacing:-0.346px;">General</span>
<span class="t" style="left:35.00px;top:228.84px;font-size:12px;font-weight:700;letter-spacing:-0.012px;">Identification</span>
<span class="t" style="left:35.00px;top:250.04px;font-size:12px;color:#444;letter-spacing:0.050px;">Item number:</span>
<span class="t" style="left:35.00px;top:269.14px;font-size:12px;color:#444;letter-spacing:-0.025px;">Product:</span>
<span class="t" style="left:35.00px;top:300.84px;font-size:12px;font-weight:700;letter-spacing:0.091px;">Further identification</span>
<span class="t" style="left:35.00px;top:322.14px;font-size:12px;color:#444;letter-spacing:-0.042px;">Product name:</span>
<span class="t" style="left:35.00px;top:340.84px;font-size:12px;color:#444;letter-spacing:-0.352px;">Search name:</span>
<span class="t" style="left:35.00px;top:359.84px;font-size:12px;color:#444;letter-spacing:-0.072px;">Description:</span>
<span class="t" style="left:35.00px;top:451.84px;font-size:12px;font-weight:700;letter-spacing:-0.231px;">Product variants</span>
<span class="t" style="left:35.00px;top:472.84px;font-size:12px;color:#777;letter-spacing:0.196px;">Configuration technology:</span>
<span class="t" style="left:35.00px;top:495.84px;font-size:12px;color:#777;letter-spacing:0.244px;">Allow identical configurations:</span>
<span class="t" style="left:35.00px;top:520.84px;font-size:12px;color:#777;letter-spacing:-0.034px;">Generate variants automatically:</span>
<span class="t" style="left:35.00px;top:542.14px;font-size:12px;color:#444;letter-spacing:0.163px;">Product model group:</span>
<span class="t" style="left:35.00px;top:587.00px;font-size:13px;font-weight:700;letter-spacing:-0.443px;">Purchase</span>
<span class="t" style="left:35.00px;top:611.00px;font-size:13px;font-weight:700;letter-spacing:0.038px;">Promote</span>
<span class="t" style="left:35.00px;top:635.00px;font-size:13px;font-weight:700;letter-spacing:0.089px;">Deliver</span>
<span class="t" style="left:35.00px;top:659.00px;font-size:13px;font-weight:700;letter-spacing:-0.406px;">Sell</span>
<span class="t" style="left:35.00px;top:683.00px;font-size:13px;font-weight:700;letter-spacing:-0.468px;">Foreign trade</span>
<span class="t" style="left:630.50px;top:588.84px;font-size:12px;letter-spacing:-0.715px;">0.00</span>
<span class="t" style="left:565.00px;top:661.14px;font-size:12px;color:#1c5fd6;letter-spacing:-1.180px;">ea</span>
<span class="t" style="left:618.50px;top:661.24px;font-size:12px;letter-spacing:-0.701px;">120.00</span>
<span class="t" style="left:695.50px;top:158.04px;font-size:12px;font-weight:700;color:#555;letter-spacing:-0.349px;">Retail channels</span>
<span class="t" style="left:700.00px;top:178.84px;font-size:12px;letter-spacing:0.124px;">Operating unit number</span>
<span class="t" style="left:840.00px;top:178.84px;font-size:12px;">Name</span>
<span class="t" style="left:741.50px;top:196.84px;font-size:12px;">This grid is empty.</span>
<span class="t" style="left:852.50px;top:311.84px;font-size:12px;color:#1c62d4;letter-spacing:0.039px;">More</span>
<span class="t" style="left:695.00px;top:339.84px;font-size:12px;font-weight:700;color:#555;letter-spacing:-0.133px;">Related product variants</span>
<span class="t" style="left:695.00px;top:365.84px;font-size:12px;font-weight:700;color:#555;letter-spacing:-0.420px;">Product change cases</span>
<span class="t" style="left:695.00px;top:391.84px;font-size:12px;font-weight:700;color:#555;letter-spacing:-0.305px;">Assortments</span>
<span class="t" style="left:293.50px;top:698.14px;font-size:12px;color:#333;letter-spacing:0.033px;z-index:5;">Identify item.</span>
<span class="t" style="left:677.50px;top:698.14px;font-size:12px;color:#333;letter-spacing:-0.411px;z-index:5;">(26710)</span>
<span class="t" style="left:733.00px;top:698.14px;font-size:12px;color:#333;letter-spacing:-1.115px;z-index:5;">USD</span>
<span class="t" style="left:767.50px;top:698.14px;font-size:12px;color:#333;letter-spacing:-0.286px;z-index:5;">ceu</span>
<span class="t" style="left:823.70px;top:698.14px;font-size:12px;letter-spacing:-0.398px;z-index:5;">Close</span>
<span class="t" style="left:179.50px;top:184.30px;font-size:15px;color:#111;letter-spacing:-0.290px;z-index:20;">Physical dimensions (1 - ceu)</span>
<span class="t" style="left:371.80px;top:184.30px;font-size:15px;color:#111;letter-spacing:-0.024px;z-index:20;">- Item number:</span>
<span class="t" style="left:474.50px;top:184.30px;font-size:15px;color:#111;letter-spacing:-0.790px;z-index:20;">00014...</span>
<span class="t" style="left:171.50px;top:213.64px;font-size:12px;color:#fff;letter-spacing:-0.336px;z-index:20;">File</span>
<span class="t" style="left:255.50px;top:213.44px;font-size:12px;color:#15155a;letter-spacing:-0.172px;z-index:20;">New</span>
<span class="t" style="left:319.50px;top:213.44px;font-size:12px;color:#15155a;letter-spacing:-0.315px;z-index:20;">Delete</span>
<span class="t" style="left:381.00px;top:213.44px;font-size:12px;color:#15155a;letter-spacing:0.058px;z-index:20;">Import unit sequence group</span>
<span class="t" style="left:161.00px;top:241.84px;font-size:12px;color:#555;letter-spacing:-0.078px;z-index:20;">Length:</span>
<span class="t" style="left:300.50px;top:241.84px;font-size:12px;color:#555;letter-spacing:-0.067px;z-index:20;">Weight:</span>
<span class="t" style="left:163.50px;top:266.84px;font-size:12px;letter-spacing:0.081px;z-index:20;">Item number</span>
<span class="t" style="left:274.00px;top:266.84px;font-size:12px;letter-spacing:0.102px;z-index:20;">Unit</span>
<span class="t" style="left:320.00px;top:266.84px;font-size:12px;letter-spacing:0.143px;z-index:20;">Weight</span>
<span class="t" style="left:410.40px;top:266.84px;font-size:12px;letter-spacing:-0.186px;z-index:20;">Depth</span>
<span class="t" style="left:460.00px;top:266.84px;font-size:12px;letter-spacing:0.263px;z-index:20;">Width</span>
<span class="t" style="left:510.00px;top:266.84px;font-size:12px;letter-spacing:0.219px;z-index:20;">Height</span>
<span class="t" style="left:563.80px;top:266.84px;font-size:12px;letter-spacing:0.195px;z-index:20;">Volume</span>
<span class="t" style="left:163.00px;top:285.84px;font-size:12px;letter-spacing:-0.825px;z-index:20;">000148_202</span>
<span class="t" style="left:274.00px;top:285.84px;font-size:12px;letter-spacing:-0.680px;z-index:20;">ea</span>
<span class="t" style="left:337.50px;top:285.84px;font-size:12px;letter-spacing:-0.715px;z-index:20;">2.00</span>
<span class="t" style="left:421.00px;top:285.84px;font-size:12px;letter-spacing:-0.715px;z-index:20;">1.00</span>
<span class="t" style="left:471.50px;top:285.84px;font-size:12px;letter-spacing:-0.715px;z-index:20;">1.00</span>
<span class="t" style="left:525.50px;top:285.84px;font-size:12px;letter-spacing:-0.715px;z-index:20;">2.00</span>
<span class="t" style="left:584.50px;top:285.84px;font-size:12px;letter-spacing:-0.715px;z-index:20;">2.00</span>
<span class="t" style="left:163.00px;top:306.84px;font-size:12px;letter-spacing:-0.825px;z-index:20;">000148_202</span>
<span class="t" style="left:274.00px;top:306.84px;font-size:12px;letter-spacing:-1.094px;z-index:20;">PL</span>
<span class="t" style="left:331.00px;top:306.84px;font-size:12px;letter-spacing:-0.606px;z-index:20;">50.00</span>
<span class="t" style="left:421.00px;top:306.84px;font-size:12px;letter-spacing:-0.715px;z-index:20;">2.00</span>
<span class="t" style="left:471.50px;top:306.84px;font-size:12px;letter-spacing:-0.715px;z-index:20;">5.00</span>
<span class="t" style="left:525.50px;top:306.84px;font-size:12px;letter-spacing:-0.715px;z-index:20;">5.00</span>
<span class="t" style="left:578.00px;top:306.84px;font-size:12px;letter-spacing:-0.606px;z-index:20;">50.00</span>
<span class="t" style="left:166.00px;top:602.84px;font-size:12px;color:#333;letter-spacing:0.141px;z-index:20;">Identify item.</span>
<span class="t" style="left:554.00px;top:602.84px;font-size:12px;letter-spacing:-0.237px;z-index:20;">Close</span>
</body></html>
